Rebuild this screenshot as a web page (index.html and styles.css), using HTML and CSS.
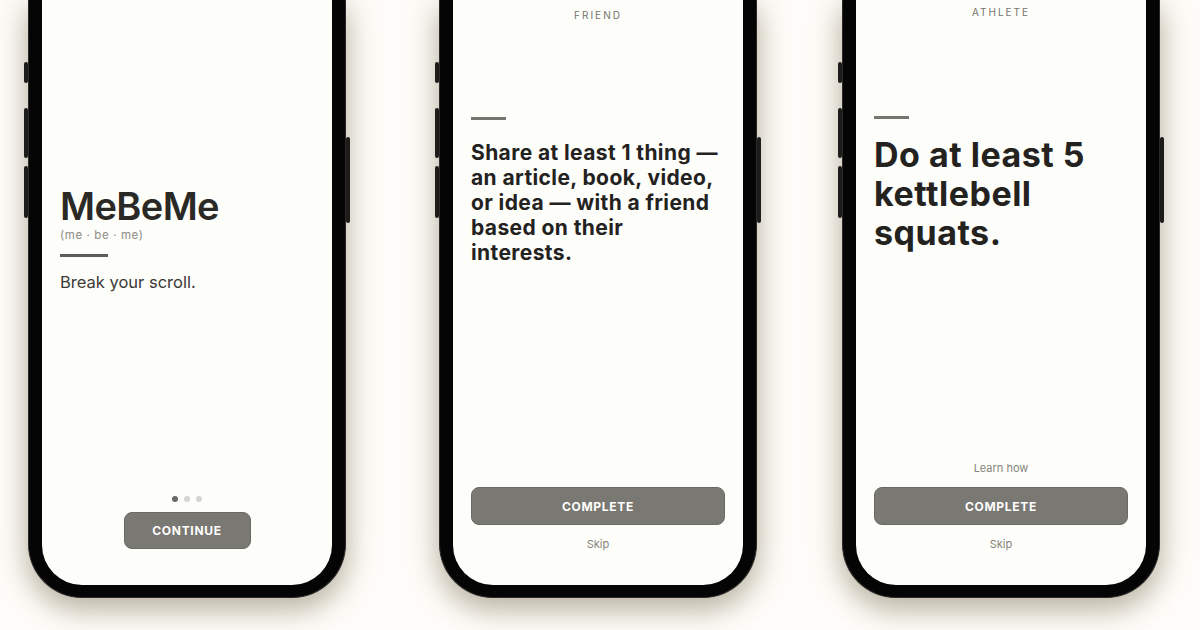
FILE: index.html
```html
<!DOCTYPE html>
<html lang="en">
<head>
  <meta charset="UTF-8">
  <meta name="viewport" content="width=device-width, initial-scale=1.0">
  <title>MeBeMe</title>
  <link rel="stylesheet" href="styles.css">
</head>
<body>
  <div class="stage">

    <!-- Welcome -->
    <div class="phone">
      <span class="side-btn mute"></span>
      <span class="side-btn vol-up"></span>
      <span class="side-btn vol-down"></span>
      <span class="side-btn power"></span>
      <div class="screen screen-intro">
        <div class="intro">
          <h1 class="brand">MeBeMe</h1>
          <p class="phonetic">(me · be · me)</p>
          <div class="rule rule-wide"></div>
          <p class="tagline">Break your scroll.</p>
        </div>
        <div class="footer">
          <div class="dots">
            <span class="dot active"></span>
            <span class="dot"></span>
            <span class="dot"></span>
          </div>
          <button class="btn btn-small">CONTINUE</button>
        </div>
      </div>
    </div>

    <!-- Friend challenge -->
    <div class="phone phone-second">
      <span class="side-btn mute"></span>
      <span class="side-btn vol-up"></span>
      <span class="side-btn vol-down"></span>
      <span class="side-btn power"></span>
      <div class="screen screen-friend">
        <p class="category">FRIEND</p>
        <div class="rule rule-friend"></div>
        <p class="task task-medium">Share at least 1 thing — an article, book, video, or idea — with a friend based on their interests.</p>
        <div class="footer">
          <button class="btn btn-full">COMPLETE</button>
          <a class="link link-skip">Skip</a>
        </div>
      </div>
    </div>

    <!-- Athlete challenge -->
    <div class="phone phone-third">
      <span class="side-btn mute"></span>
      <span class="side-btn vol-up"></span>
      <span class="side-btn vol-down"></span>
      <span class="side-btn power"></span>
      <div class="screen screen-athlete">
        <p class="category category-athlete">ATHLETE</p>
        <div class="rule rule-athlete"></div>
        <p class="task task-large">Do at least 5 kettlebell squats.</p>
        <div class="footer">
          <a class="link link-learn">Learn how</a>
          <button class="btn btn-full">COMPLETE</button>
          <a class="link link-skip">Skip</a>
        </div>
      </div>
    </div>

  </div>
</body>
</html>
```

FILE: styles.css
```css
* {
  margin: 0;
  padding: 0;
  box-sizing: border-box;
}

body {
  font-family: Inter, "Noto Sans", sans-serif;
  background-color: #fdfcf8;
  color: #2a2926;
  overflow: hidden;
}

.stage {
  display: flex;
  padding-left: 28px;
  height: 630px;
}

.phone {
  position: relative;
  flex-shrink: 0;
  width: 318px;
  height: 598px;
  background: #050505;
  border: 1px solid #2b2a28;
  border-top: none;
  border-radius: 0 0 54px 54px;
  padding: 0 13px 12px;
  box-shadow: 0 14px 24px rgba(120, 108, 80, 0.32), 0 4px 34px rgba(140, 126, 96, 0.32);
}

.phone-second {
  margin-left: 93px;
}

.phone-third {
  margin-left: 85px;
}

/* hardware buttons on the frame */
.side-btn {
  position: absolute;
  width: 4px;
  background: #1c1c1b;
  border-radius: 2px;
}

.mute { left: -5px; top: 62px; height: 21px; }
.vol-up { left: -5px; top: 108px; height: 50px; }
.vol-down { left: -5px; top: 166px; height: 52px; }
.power { right: -5px; top: 137px; height: 86px; }

.screen {
  height: 100%;
  background: #fdfdf9;
  border-radius: 0 0 40px 40px;
  display: flex;
  flex-direction: column;
  padding: 0 18px;
}

/* intro screen */
.intro {
  padding-top: 186px;
}

.brand {
  font-size: 38px;
  line-height: 40px;
  font-weight: 600;
  letter-spacing: -0.6px;
  color: #2a2926;
}

.phonetic {
  margin-top: 2px;
  font-size: 11.5px;
  line-height: 14px;
  color: #8d8c88;
  letter-spacing: 0.6px;
}

.rule {
  height: 3px;
  background: #5e5d59;
}

.rule-wide {
  width: 48px;
  margin-top: 12px;
}

.tagline {
  margin-top: 15px;
  font-size: 16.5px;
  line-height: 21px;
  color: #3b3a37;
}

.footer {
  margin-top: auto;
  display: flex;
  flex-direction: column;
  align-items: center;
}

.screen-intro .footer {
  padding-bottom: 36px;
}

.dots {
  display: flex;
  gap: 6px;
  margin-bottom: 10px;
}

.dot {
  width: 6px;
  height: 6px;
  border-radius: 50%;
  background: #d6d5d1;
}

.dot.active {
  background: #6a6965;
}

.btn {
  height: 37px;
  background: #7a7873;
  border: 1px solid #6b6965;
  border-radius: 8px;
  color: #fff;
  font-family: Inter, "Noto Sans", sans-serif;
  font-size: 12px;
  font-weight: 700;
  letter-spacing: 0.7px;
}

.btn-small {
  width: 127px;
}

.btn-full {
  width: 100%;
  height: 38px;
}

.link {
  font-size: 11px;
  line-height: 14px;
  color: #85847f;
}

.link-skip {
  margin-top: 12px;
}

.link-learn {
  margin-bottom: 12px;
}

/* challenge screens */
.category {
  text-align: center;
  font-size: 10px;
  line-height: 12px;
  letter-spacing: 2px;
  color: #75746f;
  margin-top: 9px;
}

.category-athlete {
  margin-top: 6px;
}

.rule-friend,
.rule-athlete {
  width: 35px;
  background: #76756f;
}

.rule-friend {
  margin-top: 96px;
}

.rule-athlete {
  margin-top: 98px;
}

.task {
  font-weight: 700;
  color: #23221f;
}

.task-medium {
  margin-top: 20px;
  font-size: 21px;
  line-height: 25px;
  letter-spacing: 0.4px;
}

.task-large {
  margin-top: 16px;
  font-size: 34px;
  line-height: 39px;
  letter-spacing: 0.5px;
}

.screen-friend .footer,
.screen-athlete .footer {
  padding-bottom: 34px;
}
```
